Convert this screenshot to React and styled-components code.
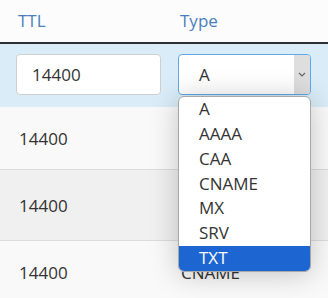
import React from "react";
import styled, { createGlobalStyle } from "styled-components";

const GlobalStyle = createGlobalStyle`
  body {
    margin: 0;
    background: #f9f9f9;
    font-family: "Open Sans", "Noto Sans", sans-serif;
    font-size: 17px;
    color: #333;
  }
`;

const Table = styled.div`
  width: 328px;
  overflow: hidden;
`;

const Row = styled.div`
  display: grid;
  grid-template-columns: 162px 1fr;
  align-items: center;
  height: ${(p) => p.$h}px;
  background: ${(p) => p.$bg || "#f9f9f9"};
  border-bottom: 1px solid #dcdcdc;
`;

const HeaderRow = styled(Row)`
  height: 42px;
  background: #fcfcfc;
  border-bottom: 2px solid #2b2f31;
`;

const EditRow = styled(Row)`
  position: relative;
  z-index: 5;
  height: 63px;
  align-items: start;
  padding-top: 10px;
  box-sizing: border-box;
  background: #d9ecf7;
  border-bottom: none;
`;

const HeadCell = styled.div`
  padding-left: 18px;
  color: #4a7ec0;
  padding-bottom: 2px;
`;

const Cell = styled.div`
  padding-left: 19px;
`;

const EditCell = styled.div`
  padding-left: 16px;
`;

const Input = styled.input`
  box-sizing: border-box;
  width: 145px;
  height: 41px;
  border: 1px solid #cfcfcf;
  border-radius: 4px;
  padding: 0 15px;
  font: inherit;
  color: #333;
  background: #fff;
  outline: none;
`;

const SelectWrap = styled.div`
  position: relative;
  width: 133px;
`;

const SelectBox = styled.div`
  box-sizing: border-box;
  height: 41px;
  display: flex;
  align-items: center;
  border: 1px solid #5fa8e6;
  border-radius: 4px;
  background: #fff;
  overflow: hidden;
`;

const SelectValue = styled.span`
  flex: 1;
  padding-left: 20px;
`;

const Arrow = styled.span`
  align-self: stretch;
  width: 16px;
  display: flex;
  align-items: center;
  justify-content: center;
  background: #dedede;
`;

const List = styled.ul`
  position: absolute;
  top: 42px;
  left: 0;
  width: 133px;
  box-sizing: border-box;
  margin: 0;
  padding: 0;
  list-style: none;
  background: #fff;
  border: 1px solid #a8a8a8;
  border-radius: 6px;
  overflow: hidden;
  box-shadow: 0 2px 28px rgba(0, 0, 0, 0.22);
`;

const Option = styled.li`
  height: 24.86px;
  line-height: 24.86px;
  padding-left: 20px;
  background: ${(p) => (p.$active ? "#1d66d1" : "transparent")};
  color: ${(p) => (p.$active ? "#fff" : "#333")};
`;

const types = ["A", "AAAA", "CAA", "CNAME", "MX", "SRV", "TXT"];

export default function App() {
  return (
    <>
      <GlobalStyle />
      <Table>
        <HeaderRow>
          <HeadCell>TTL</HeadCell>
          <HeadCell>Type</HeadCell>
        </HeaderRow>
        <EditRow>
          <EditCell>
            <Input defaultValue="14400" />
          </EditCell>
          <EditCell>
            <SelectWrap>
              <SelectBox>
                <SelectValue>A</SelectValue>
                <Arrow>
                  <svg width="8" height="5" viewBox="0 0 8 5">
                    <path d="M1 1l3 3 3-3" fill="none" stroke="#666" strokeWidth="1.2" />
                  </svg>
                </Arrow>
              </SelectBox>
              <List>
                {types.map((t) => (
                  <Option key={t} $active={t === "TXT"}>
                    {t}
                  </Option>
                ))}
              </List>
            </SelectWrap>
          </EditCell>
        </EditRow>
        <Row $h={62}>
          <Cell>14400</Cell>
          <Cell />
        </Row>
        <Row $h={70} $bg="#f0f0f0">
          <Cell>14400</Cell>
          <Cell />
        </Row>
        <Row $h={62}>
          <Cell>14400</Cell>
          <Cell>CNAME</Cell>
        </Row>
      </Table>
    </>
  );
}
